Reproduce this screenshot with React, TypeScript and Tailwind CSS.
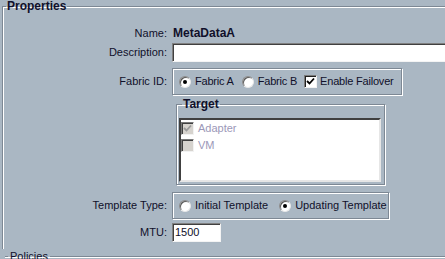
import React from "react";

const Radio = ({ checked }: { checked?: boolean }) => (
  <span className="inline-flex w-[12px] h-[12px] shrink-0 items-center justify-center rounded-full bg-white border border-t-[#8a8a8a] border-l-[#8a8a8a] border-b-[#e8e8e8] border-r-[#e8e8e8] shadow-[inset_1px_1px_0_#5a5a5a]">
    {checked && <span className="w-[4px] h-[4px] rounded-full bg-black" />}
  </span>
);

const Check = ({ checked, disabled }: { checked?: boolean; disabled?: boolean }) => (
  <span
    className={
      disabled
        ? "inline-flex w-[13px] h-[13px] shrink-0 items-center justify-center bg-[#d6d3ce] border border-t-[#7a7a7a] border-l-[#7a7a7a] border-b-[#f2f2f2] border-r-[#f2f2f2] shadow-[inset_1px_1px_0_#404040]"
        : "inline-flex w-[13px] h-[13px] shrink-0 items-center justify-center bg-white border border-t-[#7a7a7a] border-l-[#7a7a7a] border-b-[#f2f2f2] border-r-[#f2f2f2] shadow-[inset_1px_1px_0_#202020]"
    }
  >
    {checked && (
      <svg width="9" height="9" viewBox="0 0 9 9">
        <path
          d="M1 4 L3.5 6.5 L8 1.5"
          fill="none"
          stroke={disabled ? "#9a9a9a" : "#000"}
          strokeWidth="1.8"
        />
      </svg>
    )}
  </span>
);

const Box = ({ children, className }: { children: React.ReactNode; className: string }) => (
  <div
    className={
      "flex items-center whitespace-nowrap border border-[#7d8894] shadow-[inset_1px_1px_0_#fff,1px_1px_0_#fff] " +
      className
    }
  >
    {children}
  </div>
);

export default function App() {
  return (
    <div className="w-[445px] h-[259px] overflow-hidden bg-[#aab7c3] font-['Liberation_Sans',Arial,sans-serif] text-[11px] text-[#10102a]">
      <div className="w-[520px]">
        <fieldset className="ml-[2px] h-[249px] border-t border-l border-[#7d8894] shadow-[inset_1px_1px_0_#fff]">
          <legend className="ml-[3px] px-[1px] text-[12px] leading-[12px] font-bold">Properties</legend>
          <div className="grid grid-cols-[164px_1fr] gap-x-[5px] items-center mt-[13px]">
            <div className="text-right h-[16px] leading-[16px]">Name:</div>
            <div className="h-[16px] leading-[16px] text-[12px] font-bold pl-[1px]">MetaDataA</div>

            <div className="text-right mt-[2px]">Description:</div>
            <div className="mt-[2px] h-[19px] bg-white border border-t-[#808080] border-l-[#808080] border-b-[#f4f4f4] border-r-[#f4f4f4] shadow-[inset_1px_1px_0_#404040]" />

            <div className="text-right mt-[6px]">Fabric ID:</div>
            <div className="mt-[6px]">
              <Box className="w-[230px] h-[27px] pl-[6px] tracking-[-0.2px]">
                <Radio checked />
                <span className="ml-[4px] shrink-0">Fabric A</span>
                <span className="ml-[8px] shrink-0 flex"><Radio /></span>
                <span className="ml-[4px] shrink-0">Fabric B</span>
                <span className="ml-[7px] shrink-0 flex"><Check checked /></span>
                <span className="ml-[3px] shrink-0">Enable Failover</span>
              </Box>
            </div>

            <div className="mt-[2px]" />
            <div className="mt-[2px]">
              <fieldset className="ml-[4px] w-[209px] pl-[2px] pt-[7px] pb-[2px] border border-[#7d8894] shadow-[inset_1px_1px_0_#fff,1px_1px_0_#fff]">
                <legend className="ml-[3px] px-[1px] text-[12px] leading-[14px] font-bold">Target</legend>
                <div className="w-[202px] h-[64px] bg-white border-2 border-t-[#404040] border-l-[#404040] border-b-[#e6e6e6] border-r-[#e6e6e6] pt-[2px] flex flex-col gap-[4px] text-[#9c98b8]">
                  <div className="flex items-center h-[13px]">
                    <Check checked disabled />
                    <span className="ml-[4px]">Adapter</span>
                  </div>
                  <div className="flex items-center h-[13px]">
                    <Check disabled />
                    <span className="ml-[4px]">VM</span>
                  </div>
                </div>
              </fieldset>
            </div>

            <div className="text-right mt-[7px]">Template Type:</div>
            <div className="mt-[7px]">
              <Box className="w-[217px] h-[27px] pl-[6px]">
                <Radio />
                <span className="ml-[4px] shrink-0">Initial Template</span>
                <span className="ml-[11px] shrink-0 flex"><Radio checked /></span>
                <span className="ml-[4px] shrink-0">Updating Template</span>
              </Box>
            </div>

            <div className="text-right mt-[4px]">MTU:</div>
            <div className="mt-[4px]">
              <div className="w-[49px] h-[19px] bg-white border border-t-[#808080] border-l-[#808080] border-b-[#f4f4f4] border-r-[#f4f4f4] shadow-[inset_1px_1px_0_#404040] pl-[2px] leading-[17px]">
                1500
              </div>
            </div>
          </div>
        </fieldset>
        <fieldset className="ml-[5px] border-t border-[#7d8894] shadow-[inset_0_1px_0_#fff]">
          <legend className="ml-[3px] px-[2px] leading-[14px]">Policies</legend>
        </fieldset>
      </div>
    </div>
  );
}
